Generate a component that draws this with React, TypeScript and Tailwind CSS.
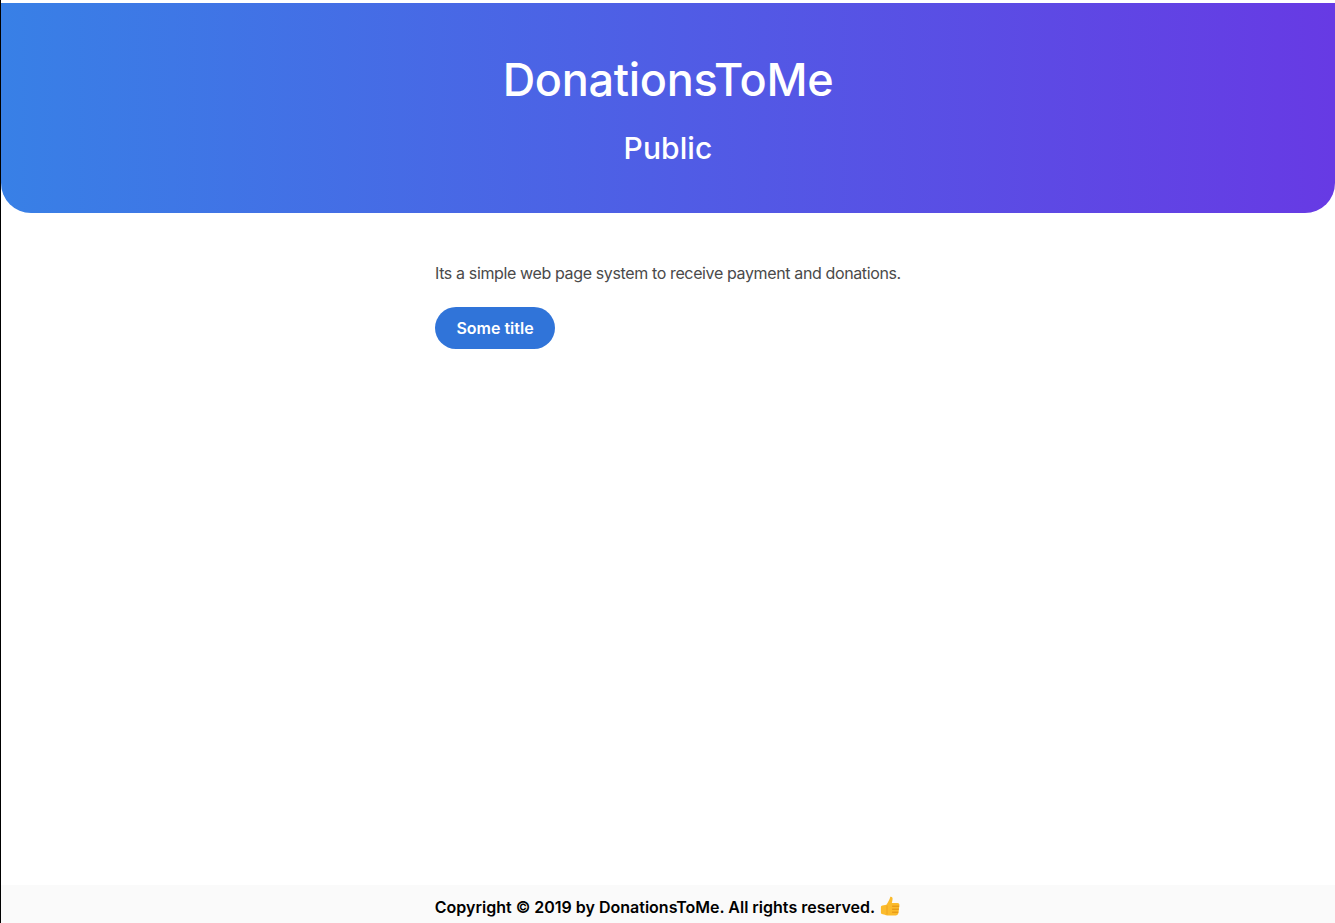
import React from 'react';

const ThumbsUp: React.FC = () => (
  <svg width="21" height="21" viewBox="0 0 21 21" className="shrink-0 -mt-[2px]">
    <path d="M10.300.8c1.300-.5 2.300.5 2.300 2 0 1.600-.5 3-.8 4.200h5.700c1.300 0 2 .9 1.900 2l-.9 7.800c-.2 1.600-1.400 2.700-3 2.700H7.500c-1.200 0-2-.3-2.700-.8L1.800 18c-.6-.3-.9-.8-.9-1.500v-5.300c0-.9.600-1.500 1.500-1.700l4-.8c1.500-2 3.200-4.900 3.900-7.900z" fill="#fbbb2c" />
    <path d="M12.500 10.200h6.300M12.500 13.200h6M12.500 16.200h5.400" stroke="#e08e12" strokeWidth="1" fill="none" strokeLinecap="round" />
    <path d="M7 9.500v9" stroke="#efa31f" strokeWidth="1" fill="none" />
  </svg>
);

const App: React.FC = () => {
  return (
    <div className="min-h-screen flex flex-col bg-white border-l border-black font-['Inter','Liberation_Sans',sans-serif] pt-[3px]">
      {/* Header */}
      <header className="h-[210px] shrink-0 flex flex-col items-center rounded-b-[30px] bg-linear-to-r/srgb from-[#3880e6] to-[#673ae4] text-white">
        <h1 className="mt-[47px] text-[45px] leading-[60px] font-medium tracking-[-0.3px]">DonationsToMe</h1>
        <h2 className="mt-[18px] text-[30px] leading-[40px] font-medium tracking-[0.1px]">Public</h2>
      </header>

      {/* Content */}
      <main className="flex-1 w-[466px] ml-[434px] pt-[50px]">
        <p className="text-[16px] leading-[20px] text-[#4a4a4a] whitespace-nowrap tracking-[-0.37px]">
          Its a simple web page system to receive payment and donations.
        </p>
        <button className="mt-[24px] w-[120px] h-[42px] rounded-full bg-[#3074d9] text-white text-[16px] font-semibold">
          Some title
        </button>
      </main>

      {/* Footer */}
      <footer className="h-[38px] shrink-0 flex items-center justify-center gap-[5px] bg-[#fafafa] text-black text-[16px] font-semibold pt-[6px]">
        <span>Copyright © 2019 by DonationsToMe. All rights reserved.</span>
        <ThumbsUp />
      </footer>
    </div>
  );
};

export default App;
